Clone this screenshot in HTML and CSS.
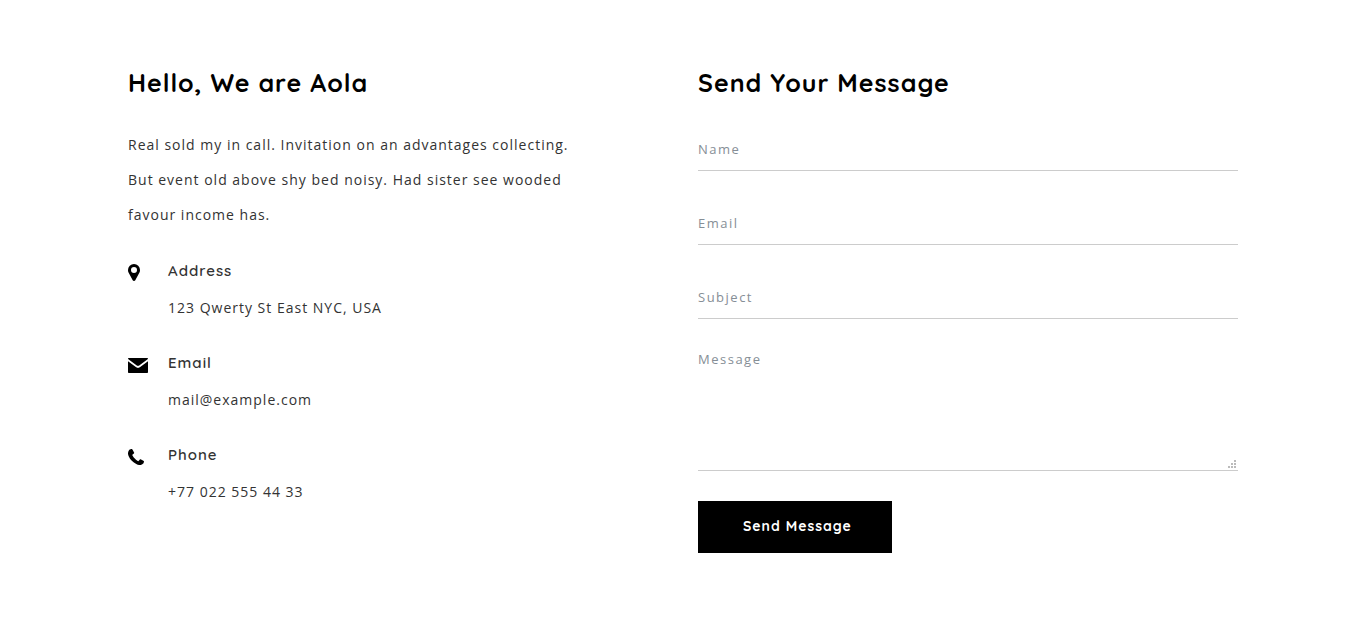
FILE: index.html
```html
<!DOCTYPE html>
<html lang="en">
<head>
<meta charset="utf-8">
<meta name="viewport" content="width=device-width, initial-scale=1">
<title>Contact Aola</title>
<link rel="stylesheet" href="styles.css">
</head>
<body>
<main class="contact">
  <section class="about">
    <h2 class="title">Hello, We are Aola</h2>
    <p class="intro">Real sold my in call. Invitation on an advantages collecting. But event old above shy bed noisy. Had sister see wooded favour income has.</p>
    <div class="info">
      <svg class="icon" width="12" height="20" viewBox="0 0 12 20" aria-hidden="true"><path fill-rule="evenodd" d="M6 2a6 6 0 0 1 6 6c0 .9-.1 1.700-.4 2.300L7.300 18.300a1.500 1.500 0 0 1-2.600 0L.4 10.300C.1 9.700 0 8.900 0 8a6 6 0 0 1 6-6zm0 3a3 3 0 1 0 0 6 3 3 0 0 0 0-6z"/></svg>
      <div>
        <h3 class="label">Address</h3>
        <p class="value">123 Qwerty St East NYC, USA</p>
      </div>
    </div>
    <div class="info">
      <svg class="icon" width="20" height="20" viewBox="0 0 20 20" aria-hidden="true"><path d="M0 7.200l7.500 5.500c.9.600 1.700 1.200 2.500 1.200s1.600-.6 2.500-1.200L20 7.200v11c0 .5-.3.800-.8.800H.8c-.5 0-.8-.3-.8-.8zM.6 4h18.800c.4 0 .6.200.6.600 0 .4-.3.700-.7 1l-7.100 5.200c-.7.500-1.500 1.100-2.200 1.100s-1.500-.6-2.200-1.100L.7 5.600C.3 5.300 0 5 0 4.600 0 4.200.2 4 .6 4z"/></svg>
      <div>
        <h3 class="label">Email</h3>
        <p class="value">mail@example.com</p>
      </div>
    </div>
    <div class="info">
      <svg class="icon" width="16" height="20" viewBox="0 -1 16 20" aria-hidden="true"><path d="M16 14.100c0 .5-.2 1.400-.4 1.900-.3.700-1.100 1.100-1.800 1.500-.8.500-1.700.6-2.600.5-1-.1-2-.5-2.900-1-1.700-.8-3.200-1.900-4.500-3.200S1.400 11 .7 9.300C.2 8.200-.1 7.100 0 6c.1-1 .5-1.900 1-2.700.4-.6.9-.8 1.600-1C3 2.100 3.500 2 3.900 2c.2 0 .4.300.5.500.5.900 1 1.800 1.500 2.800.1.200.3.500.3.700 0 .7-1.900 1.500-1.900 2.100 0 .3.300.7.500 1 1.200 2 2.600 3.400 4.600 4.600.2.200.6.500.9.500.6 0 1.400-1.900 2-1.900.3 0 .5.200.8.300.9.500 1.800 1 2.700 1.400.1.100.2.100.2.100z"/></svg>
      <div>
        <h3 class="label">Phone</h3>
        <p class="value">+77 022 555 44 33</p>
      </div>
    </div>
  </section>
  <section class="message">
    <h2 class="title">Send Your Message</h2>
    <form class="form">
      <input class="field" type="text" name="name" placeholder="Name" aria-label="Name">
      <input class="field" type="email" name="email" placeholder="Email" aria-label="Email">
      <input class="field" type="text" name="subject" placeholder="Subject" aria-label="Subject">
      <textarea class="field area" name="message" placeholder="Message" aria-label="Message"></textarea>
      <button class="send" type="submit">Send Message</button>
    </form>
  </section>
</main>
</body>
</html>
```
FILE: styles.css
```css
* {
  box-sizing: border-box;
}

body {
  margin: 0;
  background: #fff;
  color: #333;
  font-family: "Open Sans", sans-serif;
  font-size: 14px;
  letter-spacing: 1px;
}

.contact {
  display: grid;
  grid-template-columns: 1fr 1fr;
  column-gap: 30px;
  max-width: 1140px;
  margin: 0 auto;
  padding: 67px 15px 79px;
}

.title {
  margin: 0 0 28px;
  color: #000;
  font-family: Quicksand, Lato, sans-serif;
  font-size: 25px;
  font-weight: 700;
  line-height: 32px;
}

.intro {
  max-width: 445px;
  margin: 0 0 27px;
  line-height: 35px;
}

.info {
  display: grid;
  grid-template-columns: 20px 1fr;
  column-gap: 20px;
  margin-bottom: 31px;
}

.icon {
  margin-top: 3px;
  fill: #000;
}

.label {
  margin: 0 0 13px;
  font-family: Quicksand, Lato, sans-serif;
  font-size: 15px;
  font-weight: 600;
  line-height: 24px;
}

.value {
  margin: 0;
  line-height: 24px;
}

.form {
  display: flex;
  flex-direction: column;
  align-items: flex-start;
  gap: 30px;
}

.field {
  display: block;
  width: 100%;
  height: 44px;
  padding: 0;
  border: 0;
  border-bottom: 1px solid #ccc;
  border-radius: 0;
  outline: 0;
  background: transparent;
  color: #333;
  font-family: inherit;
  font-size: 13px;
  letter-spacing: 1.5px;
}

.field:focus {
  border-color: #000;
}

.field::placeholder {
  color: #868e96;
  opacity: 1;
}

.area {
  height: 122px;
  line-height: 20px;
  resize: vertical;
}

.area::-webkit-resizer {
  background:
    linear-gradient(#bbb, #bbb) 11px 5px / 2px 2px no-repeat,
    linear-gradient(#bbb, #bbb) 8px 8px / 2px 2px no-repeat,
    linear-gradient(#bbb, #bbb) 11px 8px / 2px 2px no-repeat,
    linear-gradient(#bbb, #bbb) 5px 11px / 2px 2px no-repeat,
    linear-gradient(#bbb, #bbb) 8px 11px / 2px 2px no-repeat,
    linear-gradient(#bbb, #bbb) 11px 11px / 2px 2px no-repeat;
}

.send {
  min-width: 193px;
  height: 52px;
  padding: 0 40px 2px 45px;
  border: 0;
  background: #000;
  color: #fff;
  font-family: Quicksand, Lato, sans-serif;
  font-size: 14px;
  font-weight: 700;
  letter-spacing: inherit;
  cursor: pointer;
}

@media (max-width: 767px) {
  .contact {
    grid-template-columns: 1fr;
    row-gap: 40px;
  }
}
```
